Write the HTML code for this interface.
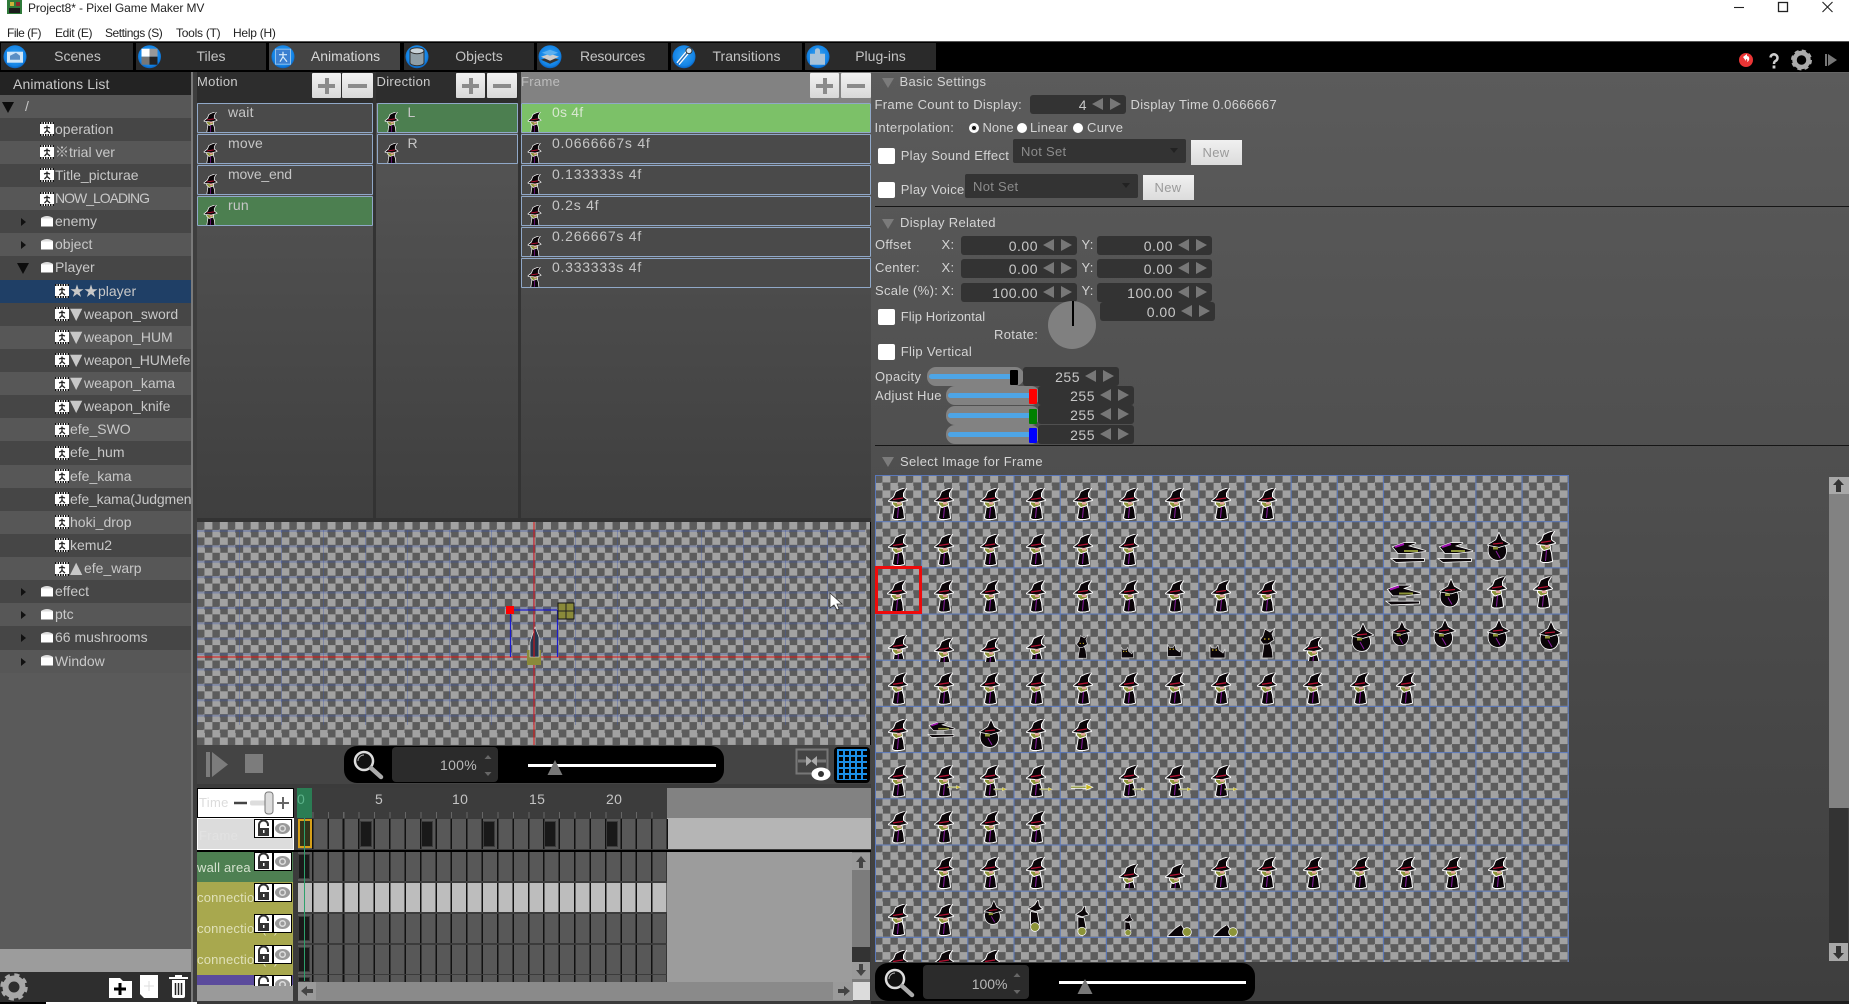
<!DOCTYPE html>
<html><head><meta charset="utf-8"><title>Project8* - Pixel Game Maker MV</title>
<style>
html,body{margin:0;padding:0;width:1849px;height:1004px;overflow:hidden;background:#000}
*{box-sizing:border-box}
body{position:relative;font-family:"Liberation Sans","Noto Sans CJK JP",sans-serif;font-size:13px;color:#d2d2d2}
.a{position:absolute}
.t{position:absolute;white-space:nowrap;line-height:16px;font-size:13px;color:#d4d4d4;letter-spacing:.32px}
.k{position:absolute;white-space:nowrap;line-height:16px;font-size:12px;color:#222}
.tab{position:absolute;top:43px;height:27px;background:#2a2a2a;color:#c4c4c4;font-size:14px;line-height:27px;text-align:center}
.tri{position:absolute;width:0;height:0;border-left:6px solid transparent;border-right:6px solid transparent;border-top:10px solid #7b7b7b}
.btn{position:absolute;top:73px;height:25px;width:29px;background:linear-gradient(#f2f2f2,#d8d8d8);border-radius:1px}
.btn:before{content:"";position:absolute;left:6px;right:6px;top:11px;height:4px;background:#8b8b8b}
.p:after{content:"";position:absolute;left:13px;top:5px;width:4px;height:16px;background:#8b8b8b}
.row{position:absolute;height:30px;background:#4a4a4a;border:1px solid #90a8c8;border-radius:1px;font-size:14px;overflow:hidden}
.row span{position:absolute;top:0;line-height:16px;color:#c6c6c6;white-space:nowrap;letter-spacing:.2px}
.row svg{position:absolute;top:8px}
.g{background:#4c7f50}.lg{background:#7cc168}
.tree{position:absolute;left:0;top:94.5px;width:191px;height:855px;overflow:hidden;background:#5a5a5a}
.r{position:relative;height:23.13px;background:#575757}
.r.d{background:#464646}
.r.s{background:#1f3f66}
.r span{position:absolute;top:3px;line-height:16px;font-size:14px;color:#c8c8c8;white-space:nowrap}
.r span u{text-decoration:none;display:inline-block;width:14px;font-family:"DejaVu Sans",sans-serif;font-size:16px;line-height:14px;letter-spacing:0}
.r svg{position:absolute;top:4.5px}
.ar{position:absolute;left:21px;top:8px;width:0;height:0;border-top:4px solid transparent;border-bottom:4px solid transparent;border-left:5px solid #111}
.dn{position:absolute;width:0;height:0;border-left:6px solid transparent;border-right:6px solid transparent;border-top:11px solid #0c0c0c;top:7px}
.sp{position:absolute;height:19px;background:#333;border-radius:3px}
.sp i{position:absolute;right:39px;top:2px;font-style:normal;font-size:14px;line-height:17px;color:#c8c8c8;letter-spacing:.5px}
.sp b{position:absolute;top:3px;width:0;height:0;border-top:6.5px solid transparent;border-bottom:6.5px solid transparent}
.sp b.l{right:23px;border-right:11px solid #777}
.sp b.n{right:5px;border-left:11px solid #777}
.cb{position:absolute;left:878px;width:17px;height:16px;background:#fff;border-radius:2px}
.rd{position:absolute;width:10px;height:10px;border-radius:50%;background:#fff;top:122.5px}
.sel{position:absolute;height:24px;width:173px;background:#333;border-radius:2px;color:#8c8c8c;line-height:26px;padding-left:8px;letter-spacing:.3px;font-size:13px}
.sel:after{content:"";position:absolute;right:8px;top:9px;border-left:4px solid transparent;border-right:4px solid transparent;border-top:5px solid #222}
.new{position:absolute;height:25px;width:51px;background:linear-gradient(#f0f0f0,#dcdcdc);color:#9a9a9a;text-align:center;line-height:25px;font-size:13px;letter-spacing:.3px}
.sl{position:absolute;height:19px;background:#828282;border-radius:9px}
.sl:before{content:"";position:absolute;left:2px;right:6px;top:7px;height:5px;background:#4ea5e6;border-radius:3px}
.sl b{position:absolute;top:3px;width:8px;height:15px;border-radius:1px}
.cells{position:absolute;left:297.5px;width:370px;height:29px;background:repeating-linear-gradient(90deg,#585858 0 13.9px,#111 13.9px 15.42px)}
.cells.w{background:repeating-linear-gradient(90deg,#bdbdbd 0 13.9px,#111 13.9px 15.42px)}
.dc{position:absolute;top:2px;bottom:2px;width:12px;background:#191919;border:1px solid #3c3c3c}
.lab{position:absolute;left:197px;width:96px;height:31px;overflow:hidden;font-size:13px;line-height:16px;letter-spacing:.2px}
.lab span{position:absolute;left:0;top:8px;white-space:nowrap;color:#dfe0b8}
.ic{position:absolute}
.pill{position:absolute;background:#000;border-radius:13px}
.in{position:absolute;background:#2b2b2b;border-radius:4px;color:#b8b8b8;font-size:14px;text-align:right}
</style></head><body>
<svg width="0" height="0" style="position:absolute">
<defs>
<radialGradient id="bl" cx="50%" cy="45%" r="55%"><stop offset="0" stop-color="#39a4f2"/><stop offset=".8" stop-color="#1384e6"/><stop offset="1" stop-color="#0a62bf"/></radialGradient>
<symbol id="w" viewBox="0 0 20 32" width="20" height="32">
<g paint-order="stroke" stroke="#fff" stroke-width="2" stroke-linejoin="round">
<path d="M7 17L13 16L15 22L16 30L12 31L7 31L5 30L6 24Z" fill="#0a0508"/>
<path d="M5 12L13 12L14 17L8 19L5 16Z" fill="#8c9438"/>
<path d="M1 13L6 9L8 4L12 2L18 0L15 5L15 9L19 12L11 14Z" fill="#0a0508"/>
</g>
<path d="M5 11.500L15 10" stroke="#b01030" stroke-width="1.300"/>
<path d="M10.500 19L9.500 30" stroke="#8a1ca0" stroke-width="1"/>
<path d="M9 14h4v2.500h-4z" fill="#e8a8a0"/>
</symbol>
<symbol id="wc" viewBox="0 0 20 24" width="20" height="24"><use href="#w"/></symbol>
<symbol id="sh" viewBox="0 0 20 32" width="20" height="32">
<path d="M7 17L13 16L15 22L16 31L5 31L6 24Z" fill="#0a0508" stroke="#ddd" stroke-width=".8"/>
<path d="M3 13L6 9L8 2L13 5L18 1L15 7L17 13L11 17L6 17Z" fill="#0a0508" stroke="#ddd" stroke-width=".8"/>
<path d="M7 12h1.500M11 12h1.500" stroke="#d8b820" stroke-width="1.300"/>
</symbol>
<symbol id="st" viewBox="0 0 38 26" width="38" height="26">
<g paint-order="stroke" stroke="#fff" stroke-width="1.600">
<path d="M3 6L14 2L26 2L18 5L36 10L20 12L8 12Z" fill="#0a0508"/><path d="M2 18L34 18L34 20L6 21Z" fill="#0a0508"/>
</g><path d="M5 6L14 3" stroke="#a010b0" stroke-width="2"/><path d="M14 10L28 10" stroke="#8c9438" stroke-width="2"/>
</symbol>
<symbol id="bb" viewBox="0 0 26 30" width="26" height="30">
<g paint-order="stroke" stroke="#fff" stroke-width="1.600" stroke-linejoin="round">
<path d="M4 14C2 22 6 28 13 28C20 28 23 20 20 14Z" fill="#0a0508"/>
<path d="M3 13L11 8L14 1L17 8L24 12L14 15Z" fill="#0a0508"/>
</g>
<path d="M8 12L18 11" stroke="#b01030" stroke-width="1.200"/><path d="M8 15h5v2.500h-5z" fill="#8c9438"/><path d="M11 19L15 26" stroke="#8a1ca0"/>
</symbol>
<symbol id="hb" viewBox="0 0 20 32" width="20" height="32">
<g paint-order="stroke" stroke="#fff" stroke-width="1.600" stroke-linejoin="round">
<path d="M4 9L10 5L13 0L14 6L17 9L10 11Z" fill="#0a0508"/>
<path d="M6 12L12 13L14 24L6 25Z" fill="#0a0508"/>
<circle cx="10" cy="27" r="4" fill="#8c9438"/>
</g>
</symbol>
<symbol id="ly" viewBox="0 0 26 12" width="26" height="12">
<g paint-order="stroke" stroke="#fff" stroke-width="1.500"><path d="M1 11L8 4L14 0L17 5L17 11Z" fill="#0a0508"/><circle cx="20" cy="7" r="4" fill="#8c9438"/></g>
</symbol>
<symbol id="ct" viewBox="0 0 20 14" width="20" height="14">
<path d="M3 0L5 3L9 3L11 0L12 5L16 8L18 4L18 13L3 13Z" fill="#0a0508" stroke="#ddd" stroke-width=".7"/><path d="M5 5h1.500M8.500 5h1.500" stroke="#d8b820" stroke-width="1.300"/>
</symbol>
<symbol id="br" viewBox="0 0 24 10" width="24" height="10"><path d="M1 5H17" stroke="#fff" stroke-width="3"/><path d="M1 5H17" stroke="#8c9438" stroke-width="1.400"/><path d="M16 2L23 5L16 8Z" fill="#c8b820" stroke="#fff" stroke-width=".6"/></symbol>
<symbol id="fi" viewBox="0 0 14 14" width="14" height="14">
<rect width="14" height="14" fill="#fff"/><path d="M0 1H14M0 13H14" stroke="#111" stroke-width="2" stroke-dasharray="1.500 1"/><path d="M7 3.500v2M4 6l3-1 3 1M7 5.500v3L4.500 11M7 8.500l3 2.500" fill="none" stroke="#222" stroke-width="1.300"/>
</symbol>
<symbol id="fo" viewBox="0 0 13 12" width="13" height="12"><path d="M0 3Q6 -1 12 3L12 11H0Z" fill="#dcdcdc"/><rect y="3.500" width="12" height="8" fill="#fff"/></symbol>
<symbol id="lk" viewBox="0 0 19 19" width="19" height="19">
<rect x=".5" y=".5" width="18" height="18" fill="#fff" stroke="#000"/><path d="M5 9V6a4.500 4.500 0 0 1 9 0V7" fill="none" stroke="#333" stroke-width="2"/><rect x="4" y="9" width="11" height="8" fill="#333"/><rect x="9" y="11" width="1.500" height="3" fill="#fff"/>
</symbol>
<symbol id="ey" viewBox="0 0 19 19" width="19" height="19">
<rect x=".5" y=".5" width="18" height="18" fill="#fff" stroke="#000"/><ellipse cx="9.500" cy="9.500" rx="7.500" ry="5.500" fill="#999"/><circle cx="9.500" cy="9.500" r="3.500" fill="#ddd"/><circle cx="9.500" cy="9.500" r="2" fill="#999"/>
</symbol>
<symbol id="mg" viewBox="0 0 32 32" width="32" height="32"><circle cx="12" cy="12" r="9" fill="#111" stroke="#ddd" stroke-width="2.500"/><path d="M6 12a6 6 0 0 1 6-6" stroke="#bbb" fill="none"/><path d="M19 19L29 28" stroke="#aaa" stroke-width="4.500" stroke-linecap="round"/></symbol>
</defs></svg>

<!-- title bar -->
<div class="a" style="left:0;top:0;width:1849px;height:41px;background:#fff"></div>
<svg class="ic" style="left:7px;top:0" width="16" height="15"><rect width="15" height="14" fill="#2f7a3a"/><rect x="3" y="2" width="4" height="4" fill="#c9b23a"/><rect x="9" y="2" width="4" height="4" fill="#8a2a2a"/><rect x="2" y="8" width="11" height="5" fill="#1c1c1c"/></svg>
<div class="k" style="left:28px;top:0;letter-spacing:-.1px">Project8* - Pixel Game Maker MV</div>
<div class="k" style="left:7px;top:25px;letter-spacing:-.5px">File (F)</div>
<div class="k" style="left:55px;top:25px;letter-spacing:-.35px">Edit (E)</div>
<div class="k" style="left:105px;top:25px;letter-spacing:-.45px">Settings (S)</div>
<div class="k" style="left:176px;top:25px;letter-spacing:-.25px">Tools (T)</div>
<div class="k" style="left:233px;top:25px;letter-spacing:-.25px">Help (H)</div>
<svg class="ic" style="left:1730px;top:0" width="110" height="14" fill="none" stroke="#222" stroke-width="1.100"><path d="M4 7.500H14"/><rect x="48.500" y="2.500" width="9" height="9" stroke-width="1.300"/><path d="M92.500 2L102.500 12M102.500 2L92.500 12"/></svg>

<!-- toolbar -->
<div class="a" style="left:0;top:41px;width:1849px;height:31px;background:#000;border-top:1px solid #555"></div>
<div class="tab" style="left:1px;width:132px;padding-left:21px">Scenes</div>
<div class="tab" style="left:136px;width:130px;padding-left:20px">Tiles</div>
<div class="tab" style="left:269px;width:131px;background:#444;color:#d8d8d8;padding-left:22px">Animations</div>
<div class="tab" style="left:404px;width:130px;padding-left:20px">Objects</div>
<div class="tab" style="left:537px;width:131px;padding-left:20px;letter-spacing:-.2px">Resources</div>
<div class="tab" style="left:671px;width:131px;padding-left:20px">Transitions</div>
<div class="tab" style="left:805px;width:131px;padding-left:20px">Plug-ins</div>
<svg class="ic" style="left:0;top:41px" width="950" height="31">
<g transform="translate(15,15.700)"><circle r="11.500" fill="url(#bl)"/><rect x="-8" y="-5" width="16" height="11" fill="#cfe6f8"/><path d="M-5 3V-1L1-4 5-1V3Z" fill="#5b8fc4"/></g>
<g transform="translate(149.500,15.700)"><circle r="11.500" fill="url(#bl)"/><rect x="-8" y="-8" width="8" height="8" fill="#fff"/><rect x="0" y="-8" width="8" height="8" fill="#999"/><rect x="-8" y="0" width="8" height="8" fill="#777"/><rect x="0" y="0" width="8" height="8" fill="#222"/></g>
<g transform="translate(283,15.700)"><circle r="11.500" fill="url(#bl)"/><rect x="-7.500" y="-7.500" width="15" height="15" fill="#3b7fd0" stroke="#8cc0ee"/><path d="M0-5V0M-4-2L4-2M0 0L-3 5M0 0L4 5" stroke="#d8ecfb" stroke-width="1.200" fill="none"/></g>
<g transform="translate(417,15.700)"><circle r="11.500" fill="url(#bl)"/><path d="M-7-6V6A7 3 0 0 0 7 6V-6Z" fill="#8f9ea6" stroke="#333"/><ellipse cy="-6" rx="7" ry="3" fill="#c7d2d8" stroke="#333"/></g>
<g transform="translate(550,15.700)"><circle r="11.500" fill="url(#bl)"/><path d="M0 0L9 3 0 7-9 3Z" fill="#333"/><path d="M0-3L9 0 0 4-9 0Z" fill="#ccc"/><path d="M0-7L8-4 0-1-8-4Z" fill="#5bb0f0"/></g>
<g transform="translate(684,15.700)"><circle r="11.500" fill="url(#bl)"/><path d="M-6 7L4-5" stroke="#fff" stroke-width="4"/><path d="M-6 7L4-5" stroke="#2a70b8" stroke-width="1.500"/><circle cx="5" cy="-6" r="3" fill="#d8e8f4" stroke="#333"/></g>
<g transform="translate(818,15.700)"><circle r="11.500" fill="url(#bl)"/><path d="M-8-3H-3V-6A2.500 2.500 0 0 1 2-6V-3H7V8H-8Z" fill="#a8c2d8"/></g>
</svg>
<svg class="ic" style="left:1735px;top:48px" width="110" height="24">
<circle cx="11" cy="12" r="7" fill="#ea3535"/><path d="M8 9l4-3v2c3 0 3 5 0 6 1-2 0-3-1-3v2z" fill="#fff"/>
<path d="M35.500 9.500a3.500 3.500 0 1 1 5 3.500c-1 .6-1.500 1-1.500 3" fill="none" stroke="#ccc" stroke-width="2.500"/><rect x="37.600" y="17.500" width="2.800" height="3" fill="#ccc"/>
<circle cx="66.500" cy="12" r="7" fill="none" stroke="#aaa" stroke-width="4.500"/><circle cx="66.500" cy="12" r="9" fill="none" stroke="#aaa" stroke-width="3" stroke-dasharray="4 3.070"/>
<rect x="90" y="6" width="2" height="12" fill="#777"/><path d="M93 6L102 12 93 18Z" fill="#777"/>
</svg>

<!-- left panel -->
<div class="a" style="left:0;top:72px;width:191px;height:22.500px;background:#232323"></div>
<div class="t" style="left:13px;top:76px;font-size:14px;letter-spacing:.1px;color:#c8c8c8">Animations List</div>
<div class="tree">
<div class="r"><i class="dn" style="left:2px"></i><span style="left:25px">/</span></div>
<div class="r d"><svg style="left:40px"><use href="#fi"/></svg><span style="left:55px">operation</span></div>
<div class="r"><svg style="left:40px"><use href="#fi"/></svg><span style="left:55px">※trial ver</span></div>
<div class="r d"><svg style="left:40px"><use href="#fi"/></svg><span style="left:55px">Title_picturae</span></div>
<div class="r"><svg style="left:40px"><use href="#fi"/></svg><span style="left:55px;letter-spacing:-1px">NOW_LOADING</span></div>
<div class="r d"><i class="ar"></i><svg style="left:41px"><use href="#fo"/></svg><span style="left:55px">enemy</span></div>
<div class="r"><i class="ar"></i><svg style="left:41px"><use href="#fo"/></svg><span style="left:55px">object</span></div>
<div class="r d"><i class="dn" style="left:17px"></i><svg style="left:41px"><use href="#fo"/></svg><span style="left:55px">Player</span></div>
<div class="r s"><svg style="left:55px"><use href="#fi"/></svg><span style="left:70px">★★player</span></div>
<div class="r d"><svg style="left:55px"><use href="#fi"/></svg><span style="left:70px"><u>▼</u>weapon_sword</span></div>
<div class="r"><svg style="left:55px"><use href="#fi"/></svg><span style="left:70px"><u>▼</u>weapon_HUM</span></div>
<div class="r d"><svg style="left:55px"><use href="#fi"/></svg><span style="left:70px;letter-spacing:-.15px"><u>▼</u>weapon_HUMefe</span></div>
<div class="r"><svg style="left:55px"><use href="#fi"/></svg><span style="left:70px"><u>▼</u>weapon_kama</span></div>
<div class="r d"><svg style="left:55px"><use href="#fi"/></svg><span style="left:70px"><u>▼</u>weapon_knife</span></div>
<div class="r"><svg style="left:55px"><use href="#fi"/></svg><span style="left:70px">efe_SWO</span></div>
<div class="r d"><svg style="left:55px"><use href="#fi"/></svg><span style="left:70px">efe_hum</span></div>
<div class="r"><svg style="left:55px"><use href="#fi"/></svg><span style="left:70px">efe_kama</span></div>
<div class="r d"><svg style="left:55px"><use href="#fi"/></svg><span style="left:70px;letter-spacing:-.15px">efe_kama(Judgment</span></div>
<div class="r"><svg style="left:55px"><use href="#fi"/></svg><span style="left:70px">hoki_drop</span></div>
<div class="r d"><svg style="left:55px"><use href="#fi"/></svg><span style="left:70px">kemu2</span></div>
<div class="r"><svg style="left:55px"><use href="#fi"/></svg><span style="left:70px"><u>▲</u>efe_warp</span></div>
<div class="r d"><i class="ar"></i><svg style="left:41px"><use href="#fo"/></svg><span style="left:55px">effect</span></div>
<div class="r"><i class="ar"></i><svg style="left:41px"><use href="#fo"/></svg><span style="left:55px">ptc</span></div>
<div class="r d"><i class="ar"></i><svg style="left:41px"><use href="#fo"/></svg><span style="left:55px">66 mushrooms</span></div>
<div class="r"><i class="ar"></i><svg style="left:41px"><use href="#fo"/></svg><span style="left:55px">Window</span></div>
</div>
<div class="a" style="left:0;top:949px;width:191px;height:23px;background:#9c9c9c"></div>
<div class="a" style="left:0;top:972px;width:193px;height:30px;background:#2e2e2e"></div>
<svg class="ic" style="left:0;top:972px" width="192" height="30">
<circle cx="14" cy="15" r="8.500" fill="none" stroke="#a8a8a8" stroke-width="6"/><circle cx="14" cy="15" r="12" fill="none" stroke="#a8a8a8" stroke-width="3.500" stroke-dasharray="5 4.420"/>
<path d="M109 26V6H120L123 9H132V26Z" fill="#fff"/><path d="M120 11v12M114 17h12" stroke="#000" stroke-width="3"/>
<path d="M140 3H158V26H144L140 22Z" fill="#fff"/><path d="M149 9v10M144 14h10" stroke="#ddd"/>
<path d="M172 8V24Q172 26 174 26H183Q185 26 185 24V8Z" fill="#fff"/><path d="M169 6H188" stroke="#fff" stroke-width="2"/><path d="M175 4H182" stroke="#fff" stroke-width="2"/><path d="M175.500 11V23M178.500 11V23M181.500 11V23" stroke="#222" stroke-width="1.500"/>
</svg>
<div class="a" style="left:191px;top:72px;width:2px;height:930px;background:#7a7a7a"></div>
<div class="a" style="left:193px;top:72px;width:4px;height:930px;background:#3e3e3e"></div>
<div class="a" style="left:46px;top:1002px;width:332px;height:2px;background:#fff"></div>

<!-- column area -->
<div class="a" style="left:197px;top:72px;width:176px;height:31px;background:#2d2d2d"></div>
<div class="a" style="left:376px;top:72px;width:142px;height:31px;background:#2d2d2d"></div>
<div class="a" style="left:521px;top:72px;width:350px;height:31px;background:#828282"></div>
<div class="a" style="left:197px;top:103px;width:176px;height:415px;background:linear-gradient(#565656,#3f3f3f)"></div>
<div class="a" style="left:376px;top:103px;width:142px;height:415px;background:linear-gradient(#565656,#3f3f3f)"></div>
<div class="a" style="left:521px;top:103px;width:350px;height:415px;background:linear-gradient(#565656,#3f3f3f)"></div>
<div class="a" style="left:373px;top:72px;width:3px;height:446px;background:#333"></div>
<div class="a" style="left:518px;top:72px;width:3px;height:446px;background:#333"></div>
<div class="a" style="left:197px;top:518px;width:674px;height:4px;background:#333"></div>
<div class="t" style="left:197px;top:74px;color:#ccc">Motion</div>
<div class="t" style="left:376.500px;top:74px;color:#ccc">Direction</div>
<div class="t" style="left:521px;top:74px;color:#bdbdbd">Frame</div>
<div class="btn p" style="left:311.500px"></div><div class="btn" style="left:342px;width:30.500px"></div>
<div class="btn p" style="left:456px"></div><div class="btn" style="left:487px;width:30px"></div>
<div class="btn p" style="left:810px"></div><div class="btn" style="left:841px;width:29.500px"></div>

<div class="row" style="left:197px;top:103px;width:176px"><svg style="left:5px" width="15" height="22"><use href="#w" width="15" height="22"/></svg><span style="left:30px">wait</span></div>
<div class="row" style="left:197px;top:134px;width:176px"><svg style="left:5px" width="15" height="22"><use href="#w" width="15" height="22"/></svg><span style="left:30px">move</span></div>
<div class="row" style="left:197px;top:165px;width:176px"><svg style="left:5px" width="15" height="22"><use href="#w" width="15" height="22"/></svg><span style="left:30px;letter-spacing:-.2px">move_end</span></div>
<div class="row g" style="left:197px;top:196px;width:176px"><svg style="left:5px" width="15" height="22"><use href="#w" width="15" height="22"/></svg><span style="left:30px">run</span></div>
<div class="row g" style="left:376.500px;top:103px;width:141px"><svg style="left:6px" width="15" height="22"><use href="#w" width="15" height="22"/></svg><span style="left:30px">L</span></div>
<div class="row" style="left:376.500px;top:134px;width:141px"><svg style="left:6px" width="15" height="22"><use href="#w" width="15" height="22"/></svg><span style="left:30px">R</span></div>
<div class="row lg" style="left:521px;top:103px;width:349.500px"><svg style="left:5px" width="15" height="22"><use href="#w" width="15" height="22"/></svg><span style="left:30px;color:#d8e8d0">0s 4f</span></div>
<div class="row" style="left:521px;top:134px;width:349.500px"><svg style="left:5px" width="15" height="22"><use href="#w" width="15" height="22"/></svg><span style="left:30px;letter-spacing:.75px">0.0666667s 4f</span></div>
<div class="row" style="left:521px;top:165px;width:349.500px"><svg style="left:5px" width="15" height="22"><use href="#w" width="15" height="22"/></svg><span style="left:30px;letter-spacing:.75px">0.133333s 4f</span></div>
<div class="row" style="left:521px;top:196px;width:349.500px"><svg style="left:5px" width="15" height="22"><use href="#w" width="15" height="22"/></svg><span style="left:30px;letter-spacing:.75px">0.2s 4f</span></div>
<div class="row" style="left:521px;top:226.500px;width:349.500px"><svg style="left:5px" width="15" height="22"><use href="#w" width="15" height="22"/></svg><span style="left:30px;letter-spacing:.75px">0.266667s 4f</span></div>
<div class="row" style="left:521px;top:257.500px;width:349.500px"><svg style="left:5px" width="15" height="22"><use href="#w" width="15" height="22"/></svg><span style="left:30px;letter-spacing:.75px">0.333333s 4f</span></div>

<!-- canvas -->
<div class="a" style="left:197px;top:522px;width:673px;height:223px;background:conic-gradient(#a2a2a2 25%,#5c5c5c 0 50%,#a2a2a2 0 75%,#5c5c5c 0);background-size:15.400px 15.400px"></div>
<div class="a" style="left:197px;top:530px;width:668px;height:195px;background:linear-gradient(rgba(60,85,170,.32) 2px,transparent 2px),linear-gradient(90deg,rgba(60,85,170,.36) 1px,transparent 1px);background-size:15.400px 15.400px,42px 42px"></div>
<svg class="ic" style="left:197px;top:522px" width="673" height="223">
<path d="M337 0V223" stroke="#e01010" stroke-width="1"/><path d="M0 135H673" stroke="#e01010" stroke-width="1"/>
<path d="M313 88H360M313.500 88V135M360.500 88V135" stroke="#1a1ad0" stroke-width="1.200" fill="none"/>
<rect x="309" y="84" width="8" height="8" fill="#f00"/>
<rect x="361" y="81" width="16" height="16" fill="#8a8a3a" stroke="#111"/><path d="M369 81V97M361 89H377" stroke="#222"/>
<rect x="330" y="128" width="14" height="15" fill="#8a8a3a"/>
<path d="M333 120L338 105 342 115 342 135H333Z" fill="#27384f" stroke="#eee" stroke-width=".6"/><path d="M337 107V135" stroke="#e01010"/>
<path d="M633 71V86L637 83 640 88 642 87 640 82 645 82Z" fill="#fff" stroke="#333" stroke-width=".8"/>
</svg>

<!-- control bar -->
<div class="a" style="left:197px;top:745px;width:674px;height:39px;background:#444"></div>
<svg class="ic" style="left:205px;top:750px" width="60" height="30"><rect x="1" y="2" width="4" height="25" fill="#7c7c7c"/><path d="M7 2L23 14.500 7 27Z" fill="#7c7c7c"/><rect x="40" y="4" width="18" height="19" fill="#7c7c7c"/></svg>
<div class="pill" style="left:344px;top:746px;width:380px;height:37px"></div>
<svg class="ic" style="left:352px;top:749px" width="34" height="32"><use href="#mg"/></svg>
<div class="in" style="left:392px;top:747px;width:106px;height:35px;line-height:36px;padding-right:21px;letter-spacing:.3px">100%</div>
<svg class="ic" style="left:482px;top:751px" width="12" height="28" fill="#666"><path d="M6 4l3.500 4h-7zM6 25l3.500-4h-7z"/></svg>
<div class="a" style="left:528px;top:763.500px;width:188px;height:3px;background:#fff"></div>
<svg class="ic" style="left:547px;top:760px" width="16" height="16"><path d="M8 0L15.500 15H.5Z" fill="#777"/></svg>
<svg class="ic" style="left:795px;top:748px" width="40" height="34" fill="none"><rect x="1.500" y="1.500" width="31" height="24" stroke="#777" stroke-width="2"/><path d="M3 13H12M31 13H21" stroke="#777" stroke-width="3"/><path d="M11 8L17 13 11 18ZM22 8L16 13 22 18Z" fill="#aaa"/><ellipse cx="26" cy="26" rx="9.500" ry="6.500" fill="#fff"/><circle cx="26" cy="26" r="3" fill="#333"/></svg>
<div class="a" style="left:834px;top:746.500px;width:36px;height:36.500px;background:#000;border-radius:4px"></div>
<div class="a" style="left:837px;top:749px;width:30px;height:31px;background:linear-gradient(#1c8fe6 2px,transparent 2px),linear-gradient(90deg,#1c8fe6 2px,transparent 2px);background-size:6px 6px"></div>

<!-- timeline -->
<div class="a" style="left:197px;top:784px;width:674px;height:220px;background:#3b3b3b"></div>
<div class="a" style="left:197px;top:788px;width:97px;height:30px;background:#fff;border:1px solid #000"></div>
<div class="t" style="left:199px;top:795px;color:#dcdcdc">Time</div>
<svg class="ic" style="left:232px;top:790px" width="60" height="28"><path d="M2 13H15" stroke="#444" stroke-width="2.500"/><rect x="18" y="10.500" width="20" height="5" rx="2" fill="#ddd"/><rect x="33" y="2" width="8" height="22" rx="3" fill="#ddd" stroke="#777"/><path d="M45 13H57M51 7V19" stroke="#666" stroke-width="2"/></svg>
<div class="a" style="left:297.500px;top:788px;width:370px;height:30px;background:repeating-linear-gradient(90deg,transparent 0 14.400px,#666 14.400px 15.420px) 0 24px/100% 6px no-repeat,#3c3c3c"></div>
<div class="a" style="left:297px;top:788px;width:15px;height:30px;background:#2b7d54"></div>
<div class="a" style="left:667px;top:788px;width:205px;height:30px;background:#828282"></div>
<div class="t" style="left:297px;top:791px;font-size:14px;color:#5cb28a">0</div>
<div class="t" style="left:375px;top:791px;font-size:14px;color:#c4c4c4">5</div>
<div class="t" style="left:452px;top:791px;font-size:14px;color:#c4c4c4">10</div>
<div class="t" style="left:529px;top:791px;font-size:14px;color:#c4c4c4">15</div>
<div class="t" style="left:606px;top:791px;font-size:14px;color:#c4c4c4">20</div>

<div class="a" style="left:197px;top:818px;width:97px;height:32px;background:#dcdcdc;border:1px solid #fff"></div>
<div class="t" style="left:199px;top:828px;color:#e2e2e2">Frame</div>
<div class="a" style="left:667px;top:818px;width:205px;height:31px;background:#b5b5b5"></div>
<div class="cells" style="top:819px;height:30px">
<i class="dc" style="left:62px"></i><i class="dc" style="left:123.500px"></i><i class="dc" style="left:185px"></i><i class="dc" style="left:246.500px"></i><i class="dc" style="left:308px"></i>
</div>
<div class="a" style="left:297.500px;top:819px;width:14.500px;height:29px;background:#33331a;border:2px solid #d59f19"></div>
<div class="a" style="left:197px;top:849.500px;width:674px;height:2px;background:#000"></div>

<div class="lab" style="top:851.500px;background:#4e8052"><span style="color:#d5e2cf">wall area</span></div>
<div class="lab" style="top:882.300px;background:#a8a84e"><span>connection</span></div>
<div class="lab" style="top:913.100px;background:#a8a84e"><span>connection(1)</span></div>
<div class="lab" style="top:943.900px;background:#a8a84e"><span>connection(2)</span></div>
<div class="a" style="left:197px;top:975px;width:96px;height:10px;background:#5b4b9c"></div>
<div class="a" style="left:197px;top:985px;width:96px;height:16px;background:#9a9a9a"></div>

<svg class="ic" style="left:254px;top:818.500px" width="40" height="167">
<use href="#lk" x="0" y="0"/><use href="#ey" x="19" y="0"/>
<use href="#lk" x="0" y="33"/><use href="#ey" x="19" y="33"/>
<use href="#lk" x="0" y="64"/><use href="#ey" x="19" y="64"/>
<use href="#lk" x="0" y="95"/><use href="#ey" x="19" y="95"/>
<use href="#lk" x="0" y="126"/><use href="#ey" x="19" y="126"/>
<use href="#lk" x="0" y="156"/><use href="#ey" x="19" y="156"/>
</svg>

<div class="cells" style="top:852px"><i class="dc" style="left:0"></i></div>
<div class="cells w" style="top:883px"></div>
<div class="cells" style="top:913.500px"><i class="dc" style="left:0"></i></div>
<div class="cells" style="top:944.500px"><i class="dc" style="left:0"></i></div>
<div class="cells" style="top:975px;height:7px"><i class="dc" style="left:0;bottom:0"></i></div>
<div class="a" style="left:304px;top:818px;width:1px;height:163px;background:#2ea06c"></div>

<div class="a" style="left:667px;top:851.500px;width:185px;height:130px;background:#9c9c9c"></div>
<div class="a" style="left:852px;top:851.500px;width:18px;height:130px;background:#7c7c7c"></div>
<div class="a" style="left:852px;top:947px;width:18px;height:15px;background:#333"></div>
<div class="a" style="left:852px;top:853px;width:18px;height:17px;background:#9a9a9a"></div>
<div class="a" style="left:852px;top:962px;width:18px;height:17px;background:#9a9a9a"></div>
<svg class="ic" style="left:852px;top:853px" width="18" height="126"><path d="M9 3L14 9H11V15H7V9H4Z" fill="#444"/><path d="M9 123L14 117H11V111H7V117H4Z" fill="#444"/></svg>
<div class="a" style="left:297.500px;top:981.500px;width:555px;height:19px;background:#8a8a8a"></div>
<div class="a" style="left:298px;top:982px;width:18px;height:18px;background:#9a9a9a"></div>
<div class="a" style="left:833px;top:982px;width:20px;height:18px;background:#9a9a9a"></div>
<div class="a" style="left:853px;top:982px;width:17px;height:18px;background:#dcdcdc"></div>
<svg class="ic" style="left:298px;top:982px" width="556" height="18" fill="#444"><path d="M3 9L9 4V7H15V11H9V14Z"/><path d="M552 9L546 4V7H540V11H546V14Z"/></svg>

<!-- right panel -->
<div class="a" style="left:871px;top:72px;width:978px;height:932px;background:linear-gradient(#5b5b5b,#3e3e3e);border-top:1px solid #666"></div>
<i class="tri" style="left:882px;top:78px"></i>
<div class="t" style="left:899.500px;top:74px">Basic Settings</div>
<div class="t" style="left:874.500px;top:96.500px">Frame Count to Display:</div>
<div class="sp" style="left:1030px;top:95px;width:96px"><i>4</i><b class="l"></b><b class="n"></b></div>
<div class="t" style="left:1130.500px;top:96.500px">Display Time 0.0666667</div>
<div class="t" style="left:874.500px;top:119.500px">Interpolation:</div>
<div class="rd" style="left:968.500px;background:#111;border:2px solid #fff;box-shadow:inset 0 0 0 1px #fff"></div>
<div class="t" style="left:982.500px;top:119.500px;letter-spacing:0">None</div>
<div class="rd" style="left:1016.500px"></div>
<div class="t" style="left:1030px;top:119.500px">Linear</div>
<div class="rd" style="left:1073px"></div>
<div class="t" style="left:1087px;top:119.500px">Curve</div>
<div class="cb" style="top:147.500px"></div>
<div class="t" style="left:900.700px;top:147.500px">Play Sound Effect</div>
<div class="sel" style="left:1013px;top:139px">Not Set</div>
<div class="new" style="left:1190.500px;top:140px">New</div>
<div class="cb" style="top:181.500px"></div>
<div class="t" style="left:900.700px;top:182px">Play Voice</div>
<div class="sel" style="left:965px;top:174px">Not Set</div>
<div class="new" style="left:1142.500px;top:175px">New</div>
<div class="a" style="left:874.500px;top:206px;width:975px;height:1px;background:#161616"></div>

<i class="tri" style="left:882px;top:219px"></i>
<div class="t" style="left:900px;top:214.500px">Display Related</div>
<div class="t" style="left:875px;top:237px">Offset</div><div class="t" style="left:941.500px;top:237px">X:</div>
<div class="sp" style="left:961px;top:236px;width:116px"><i>0.00</i><b class="l"></b><b class="n"></b></div>
<div class="t" style="left:1081.500px;top:237px">Y:</div>
<div class="sp" style="left:1097px;top:236px;width:115px"><i>0.00</i><b class="l"></b><b class="n"></b></div>
<div class="t" style="left:875px;top:260px">Center:</div><div class="t" style="left:941.500px;top:260px">X:</div>
<div class="sp" style="left:961px;top:259px;width:116px"><i>0.00</i><b class="l"></b><b class="n"></b></div>
<div class="t" style="left:1081.500px;top:260px">Y:</div>
<div class="sp" style="left:1097px;top:259px;width:115px"><i>0.00</i><b class="l"></b><b class="n"></b></div>
<div class="t" style="left:875px;top:283px">Scale (%):</div><div class="t" style="left:941.500px;top:283px">X:</div>
<div class="sp" style="left:961px;top:282.500px;width:116px"><i>100.00</i><b class="l"></b><b class="n"></b></div>
<div class="t" style="left:1081.500px;top:283px">Y:</div>
<div class="sp" style="left:1097px;top:282.500px;width:115px"><i>100.00</i><b class="l"></b><b class="n"></b></div>
<div class="cb" style="top:309px"></div>
<div class="t" style="left:900.700px;top:309px;letter-spacing:.1px">Flip Horizontal</div>
<div class="t" style="left:994px;top:327px">Rotate:</div>
<div class="a" style="left:1047.500px;top:301px;width:48px;height:48px;border-radius:50%;background:#808080"></div>
<div class="a" style="left:1071.500px;top:301px;width:2.500px;height:25px;background:#000"></div>
<div class="sp" style="left:1100px;top:302px;width:115px"><i>0.00</i><b class="l"></b><b class="n"></b></div>
<div class="cb" style="top:343.500px"></div>
<div class="t" style="left:900.700px;top:344px">Flip Vertical</div>
<div class="t" style="left:875px;top:368.500px">Opacity</div>
<div class="sl" style="left:926.500px;top:367px;width:97px"><b style="left:83.500px;background:#000"></b></div>
<div class="sp" style="left:1023px;top:367px;width:96px"><i>255</i><b class="l"></b><b class="n"></b></div>
<div class="t" style="left:875px;top:388px">Adjust Hue</div>
<div class="sl" style="left:946px;top:386px;width:94px"><b style="left:83px;background:#f00"></b></div>
<div class="sl" style="left:946px;top:405.500px;width:94px"><b style="left:83px;background:#008000"></b></div>
<div class="sl" style="left:946px;top:424.500px;width:94px"><b style="left:83px;background:#00f"></b></div>
<div class="sp" style="left:1038px;top:386px;width:96px"><i>255</i><b class="l"></b><b class="n"></b></div>
<div class="sp" style="left:1038px;top:405px;width:96px"><i>255</i><b class="l"></b><b class="n"></b></div>
<div class="sp" style="left:1038px;top:424.500px;width:96px"><i>255</i><b class="l"></b><b class="n"></b></div>
<div class="a" style="left:874.500px;top:445px;width:975px;height:1px;background:#161616"></div>
<i class="tri" style="left:882px;top:457px"></i>
<div class="t" style="left:900px;top:453.500px">Select Image for Frame</div>

<!-- image grid -->
<div class="a" style="left:875px;top:475px;width:694px;height:487px;background:linear-gradient(#5a78bb 1px,transparent 1px),linear-gradient(90deg,#5a78bb 1px,transparent 1px),conic-gradient(#a2a2a2 25%,#5c5c5c 0 50%,#a2a2a2 0 75%,#5c5c5c 0);background-size:46.200px 46.200px,46.200px 46.200px,15.400px 15.400px"></div>
<svg class="ic" style="left:875px;top:475px" width="694" height="487">
<g transform="translate(0,13)"><use href="#w" x="13"/><use href="#w" x="59"/><use href="#w" x="105"/><use href="#w" x="151"/><use href="#w" x="198"/><use href="#w" x="244"/><use href="#w" x="290"/><use href="#w" x="336"/><use href="#w" x="382"/></g>
<g transform="translate(0,59)"><use href="#w" x="13"/><use href="#w" x="59"/><use href="#w" x="105"/><use href="#w" x="151"/><use href="#w" x="198"/><use href="#w" x="244"/><use href="#st" x="515" y="7"/><use href="#st" x="562" y="7"/><use href="#bb" x="610" y="-2"/><use href="#w" x="661" y="-3"/></g>
<g transform="translate(0,105.500)"><use href="#w" x="12"/><use href="#w" x="59"/><use href="#w" x="105"/><use href="#w" x="151"/><use href="#w" x="198"/><use href="#w" x="244"/><use href="#w" x="290"/><use href="#w" x="336"/><use href="#w" x="382"/><use href="#st" x="510" y="3"/><use href="#bb" x="562" y="-2"/><use href="#w" x="612" y="-4"/><use href="#w" x="658" y="-4"/></g>
<g transform="translate(0,160)"><use href="#wc" x="13"/><use href="#wc" x="59" y="3"/><use href="#wc" x="105" y="3"/><use href="#wc" x="151"/><use href="#sh" x="197" y="-1" width="20" height="25"/><use href="#ct" x="244" y="12" width="16" height="12"/><use href="#ct" x="290" y="8" width="18" height="16"/><use href="#ct" x="330" y="10" width="24" height="14"/><use href="#sh" x="381" y="-8" width="22" height="32"/><use href="#wc" x="428" y="2"/><use href="#bb" x="474" y="-12"/><use href="#bb" x="514" y="-14" width="24" height="26"/><use href="#bb" x="556" y="-16"/><use href="#bb" x="610" y="-16"/><use href="#bb" x="662" y="-14"/></g>
<g transform="translate(0,197.800)"><use href="#w" x="13"/><use href="#w" x="59"/><use href="#w" x="105"/><use href="#w" x="151"/><use href="#w" x="198"/><use href="#w" x="244"/><use href="#w" x="290"/><use href="#w" x="336"/><use href="#w" x="382"/><use href="#w" x="428"/><use href="#w" x="475"/><use href="#w" x="521"/></g>
<g transform="translate(0,244)"><use href="#w" x="13"/><use href="#st" x="52" y="2" width="30" height="20"/><use href="#bb" x="102"/><use href="#w" x="151"/><use href="#w" x="197"/></g>
<g transform="translate(0,290.200)"><use href="#w" x="13"/><use href="#w" x="59"/><use href="#w" x="105"/><use href="#w" x="151"/><use href="#w" x="244"/><use href="#w" x="290"/><use href="#w" x="336"/><use href="#br" x="195" y="17"/><use href="#br" x="72" y="18" width="14" height="8"/><use href="#br" x="118" y="20" width="14" height="8"/><use href="#br" x="164" y="20" width="14" height="8"/><use href="#br" x="257" y="20" width="14" height="8"/><use href="#br" x="303" y="20" width="14" height="8"/><use href="#br" x="349" y="20" width="14" height="8"/></g>
<g transform="translate(0,336.400)"><use href="#w" x="13"/><use href="#w" x="59"/><use href="#w" x="105"/><use href="#w" x="151"/></g>
<g transform="translate(0,382)"><use href="#w" x="59"/><use href="#w" x="105"/><use href="#w" x="151"/><use href="#wc" x="244" y="7"/><use href="#wc" x="290" y="7"/><use href="#w" x="336"/><use href="#w" x="382"/><use href="#w" x="428"/><use href="#w" x="475"/><use href="#w" x="521"/><use href="#w" x="567"/><use href="#w" x="613"/></g>
<g transform="translate(0,429)"><use href="#w" x="13"/><use href="#w" x="59"/><use href="#bb" x="107" y="-4" width="22" height="26"/><use href="#hb" x="150" y="-4"/><use href="#hb" x="197" y="2" width="20" height="30"/><use href="#hb" x="243" y="10" width="20" height="22"/><use href="#ly" x="292" y="21"/><use href="#ly" x="338" y="21"/></g>
<g transform="translate(0,475)"><use href="#w" x="13"/><use href="#w" x="59"/><use href="#w" x="105"/></g>
</svg>
<div class="a" style="left:874.500px;top:566px;width:47px;height:48px;border:3px solid #ee0b0b"></div>

<!-- right scrollbar -->
<div class="a" style="left:1829px;top:477px;width:20px;height:331px;background:#828282"></div>
<div class="a" style="left:1829px;top:808px;width:19px;height:135px;background:#333"></div>
<div class="a" style="left:1829px;top:477px;width:20px;height:17px;background:#a8a8a8"></div>
<div class="a" style="left:1829px;top:943px;width:19px;height:18px;background:#a8a8a8"></div>
<svg class="ic" style="left:1829px;top:477px" width="20" height="484" fill="#333"><path d="M9.500 2L15 8H12V15H7V8H4Z"/><path d="M9.500 482L15 476H12V469H7V476H4Z"/></svg>

<!-- bottom zoom -->
<div class="pill" style="left:874.500px;top:963px;width:380px;height:38px"></div>
<svg class="ic" style="left:883px;top:967px" width="34" height="32"><use href="#mg"/></svg>
<div class="in" style="left:922.500px;top:965px;width:106px;height:34px;line-height:38px;padding-right:21px">100%</div>
<svg class="ic" style="left:1011px;top:970px" width="12" height="28" fill="#666"><path d="M6 3l3.500 4h-7zM6 24l3.500-4h-7z"/></svg>
<div class="a" style="left:1059px;top:981px;width:187px;height:3px;background:#fff"></div>
<svg class="ic" style="left:1077px;top:979px" width="16" height="16"><path d="M8 0L15.500 15H.5Z" fill="#777"/></svg>
<div class="a" style="left:871px;top:1001px;width:978px;height:3px;background:#1c1c1c"></div>
</body></html>
